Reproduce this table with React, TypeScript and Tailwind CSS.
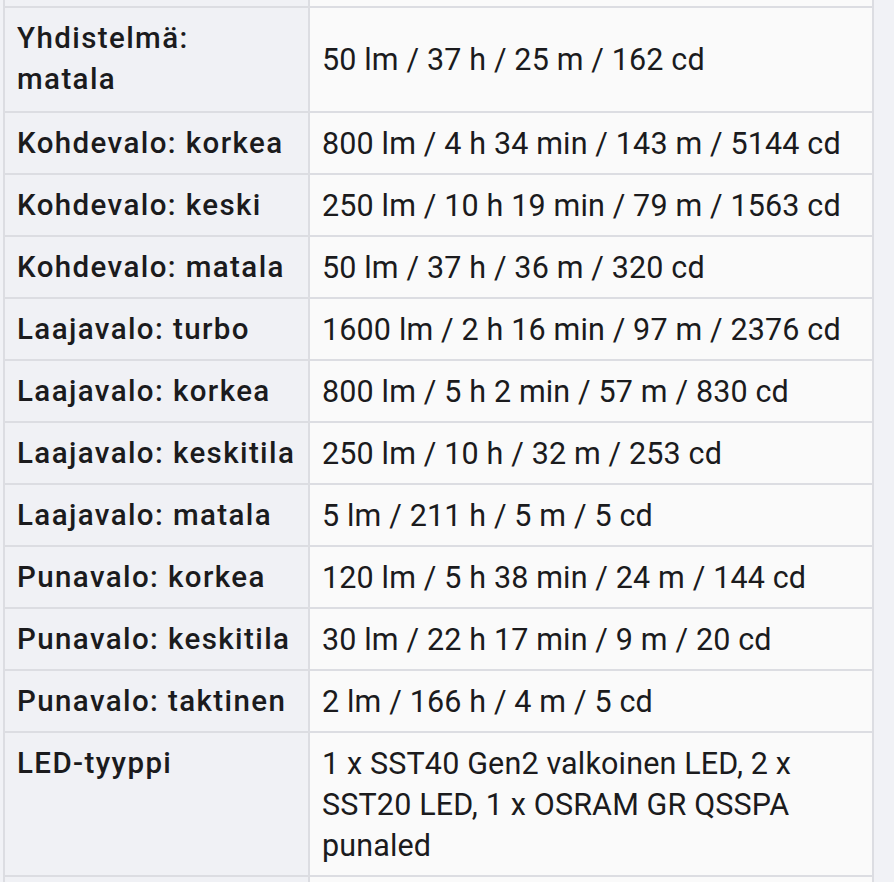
const rows: [string, string][] = [
  ['Yhdistelmä:\nmatala', '50 lm / 37 h / 25 m / 162 cd'],
  ['Kohdevalo: korkea', '800 lm / 4 h 34 min / 143 m / 5144 cd'],
  ['Kohdevalo: keski', '250 lm / 10 h 19 min / 79 m / 1563 cd'],
  ['Kohdevalo: matala', '50 lm / 37 h / 36 m / 320 cd'],
  ['Laajavalo: turbo', '1600 lm / 2 h 16 min / 97 m / 2376 cd'],
  ['Laajavalo: korkea', '800 lm / 5 h 2 min / 57 m / 830 cd'],
  ['Laajavalo: keskitila', '250 lm / 10 h / 32 m / 253 cd'],
  ['Laajavalo: matala', '5 lm / 211 h / 5 m / 5 cd'],
  ['Punavalo: korkea', '120 lm / 5 h 38 min / 24 m / 144 cd'],
  ['Punavalo: keskitila', '30 lm / 22 h 17 min / 9 m / 20 cd'],
  ['Punavalo: taktinen', '2 lm / 166 h / 4 m / 5 cd'],
  ['LED-tyyppi', '1 x SST40 Gen2 valkoinen LED, 2 x SST20 LED, 1 x OSRAM GR QSSPA punaled'],
];

export default function App() {
  return (
    <div
      className="min-h-screen bg-[#f1f2f6] leading-[41px] text-[#1b1b1d]"
      style={{ fontFamily: 'Roboto, "Noto Sans", sans-serif' }}
    >
      <div className="ml-[3px] mr-[20px] grid grid-cols-[303px_1fr] gap-[2px] bg-[#dcdde2] px-[2px]">
        {/* tail of the row above */}
        <div className="h-[6px] bg-[#f0f1f5]" />
        <div className="h-[6px] bg-[#fafafa]" />

        {rows.map(([label, value], i) => (
          <div key={label} className="contents">
            <div
              className={`whitespace-pre-line bg-[#f0f1f5] px-[12px] text-[29.5px] font-medium tracking-[1.4px] ${
                i === 0 ? 'pt-[10px] pb-[11px]' : 'py-[9.5px]'
              }`}
            >
              {label}
            </div>
            <div
              className={`flex bg-[#fafafa] px-[12px] text-[30.5px] tracking-[0.15px] ${
                i === 0 ? 'items-center pt-[10px] pb-[11px]' : 'py-[9.5px]'
              }`}
            >
              {value}
            </div>
          </div>
        ))}

        {/* start of the row below */}
        <div className="h-[10px] bg-[#f0f1f5]" />
        <div className="h-[10px] bg-[#fafafa]" />
      </div>
    </div>
  );
}
